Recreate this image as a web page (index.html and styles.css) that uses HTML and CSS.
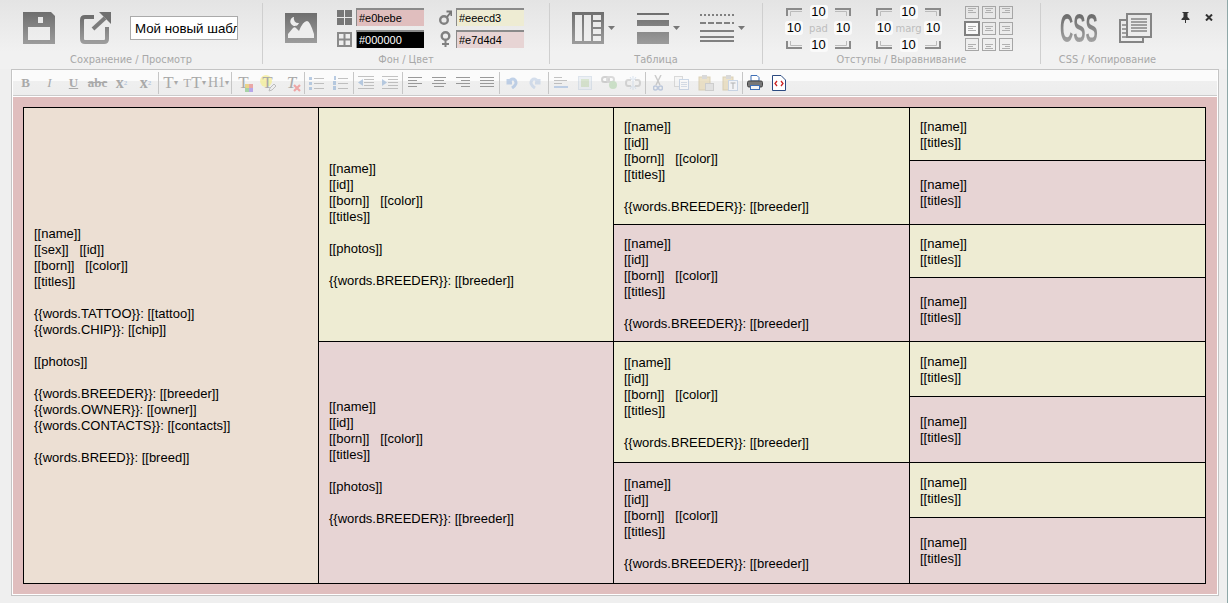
FILE: index.html
```html
<!DOCTYPE html>
<html lang="ru">

<head>
    <meta charset="UTF-8">
    <title>Редактор шаблона</title>
    <link rel="stylesheet" href="styles.css">
</head>

<body>
    <svg class="defs" width="0" height="0">
        <defs>
            <linearGradient id="grey" x1="0" y1="0" x2="0" y2="1">
                <stop offset="0" stop-color="#6e6e6e" />
                <stop offset="1" stop-color="#9c9c9c" />
            </linearGradient>
        </defs>
    </svg>

    <header class="topbar">
        <section class="group group-save">
            <div class="group-body">
                <svg class="icon" width="32" height="32" viewBox="0 0 32 32">
                    <path fill="url(#grey)" fill-rule="evenodd" d="M0 0H28L32 4V32H0ZM5 15V28H27V15ZM15 5V11H20V5Z" />
                </svg>
                <svg class="icon icon-open" width="32" height="32" viewBox="0 0 32 32">
                    <path fill="none" stroke="url(#grey)" stroke-width="4" stroke-linejoin="round" d="M15 5H6Q3 5 3 8V27Q3 30 6 30H25Q28 30 28 27V15" />
                    <path fill="none" stroke="#7c7c7c" stroke-width="4" d="M14 17L26 6" />
                    <path fill="#707070" d="M20 0H32V12Z" />
                </svg>
                <input class="name-input" type="text" value="Мой новый шаблон">
            </div>
            <div class="caption">Сохранение / Просмотр</div>
        </section>

        <section class="group group-colors">
            <div class="group-body">
                <svg class="icon" width="32" height="30" viewBox="0 0 32 30">
                    <rect width="32" height="30" fill="url(#grey)" />
                    <path fill="#ededed" d="M3 25V21L8 15Q10 13 12 16L14 18Q18 8 22 8Q25 8 29 21V25Z" />
                    <path fill="#ededed" d="M9 4A4.500 4.500 0 1 0 14 10A4.500 4.500 0 0 1 9 4Z" />
                </svg>
                <div class="swatches">
                    <div class="swatch-row">
                        <svg width="15" height="15" viewBox="0 0 15 15">
                            <path fill="#777" d="M0 0H7V7H0ZM8 0H15V7H8ZM0 8H7V15H0ZM8 8H15V15H8Z" />
                        </svg>
                        <input class="color-input bg-pink" type="text" value="#e0bebe">
                    </div>
                    <div class="swatch-row">
                        <svg width="15" height="15" viewBox="0 0 15 15">
                            <path fill="#8a8a8a" fill-rule="evenodd" d="M0 0H15V15H0ZM2 2V6.500H6.500V2ZM8.500 2V6.500H13V2ZM2 8.500V13H6.500V8.500ZM8.500 8.500V13H13V8.500Z" />
                        </svg>
                        <input class="color-input bg-black" type="text" value="#000000">
                    </div>
                </div>
                <div class="swatches swatches-sex">
                    <div class="swatch-row">
                        <svg width="13" height="15" viewBox="0 0 13 15">
                            <circle cx="5" cy="10" r="3.800" fill="none" stroke="#808080" stroke-width="2.400" />
                            <path fill="none" stroke="#777" stroke-width="2" d="M8 7L12 2M7.500 1.500H12.500V6" />
                        </svg>
                        <input class="color-input bg-yellow" type="text" value="#eeecd3">
                    </div>
                    <div class="swatch-row">
                        <svg width="13" height="16" viewBox="0 0 13 16">
                            <circle cx="6.500" cy="5" r="3.800" fill="none" stroke="#808080" stroke-width="2.400" />
                            <path fill="none" stroke="#808080" stroke-width="2" d="M6.500 9V16M3 13H10" />
                        </svg>
                        <input class="color-input bg-rose" type="text" value="#e7d4d4">
                    </div>
                </div>
            </div>
            <div class="caption">Фон / Цвет</div>
        </section>

        <section class="group group-table">
            <div class="group-body">
                <svg class="icon" width="32" height="32" viewBox="0 0 32 32">
                    <path fill="url(#grey)" fill-rule="evenodd" d="M0 0H32V32H0ZM3 3V29H10V3ZM12 3V29H19V3ZM21 3V8H29V3ZM21 10V15H29V10ZM21 17V22H29V17ZM21 24V29H29V24Z" />
                </svg>
                <svg class="caret" width="7" height="4" viewBox="0 0 7 4"><path fill="#777" d="M0 0H7L3.500 4Z" /></svg>
                <svg class="icon icon-borders" width="32" height="31" viewBox="0 0 32 31">
                    <path fill="url(#grey)" d="M0 0H32V2H0ZM0 7H32V13H0ZM0 19H32V31H0Z" />
                </svg>
                <svg class="caret" width="7" height="4" viewBox="0 0 7 4"><path fill="#777" d="M0 0H7L3.500 4Z" /></svg>
                <svg class="icon icon-lines" width="34" height="30" viewBox="0 0 34 30">
                    <g fill="none" stroke="#808080">
                        <path stroke-width="2" stroke-dasharray="2 2" d="M0 2H34" />
                        <path stroke-width="2" stroke-dasharray="6 2" d="M0 10H34" />
                        <path stroke-width="2" d="M0 18H34M0 24H34M0 28H34" />
                    </g>
                </svg>
                <svg class="caret" width="7" height="4" viewBox="0 0 7 4"><path fill="#777" d="M0 0H7L3.500 4Z" /></svg>
            </div>
            <div class="caption">Таблица</div>
        </section>

        <section class="group group-spacing">
            <div class="group-body">
                <div class="box-grid">
                    <svg class="corner" width="16" height="8" viewBox="0 0 16 8"><path fill="none" stroke="#8a8a8a" stroke-width="2" d="M1 8V1H16" /><path fill="none" stroke="#bbb" d="M4.500 8V3.500H16" /></svg>
                    <span class="num">10</span>
                    <svg class="corner" width="16" height="8" viewBox="0 0 16 8"><path fill="none" stroke="#8a8a8a" stroke-width="2" d="M15 8V1H0" /><path fill="none" stroke="#bbb" d="M11.500 8V3.500H0" /></svg>
                    <span class="num">10</span>
                    <span class="box-label">pad</span>
                    <span class="num">10</span>
                    <svg class="corner" width="16" height="8" viewBox="0 0 16 8"><path fill="none" stroke="#8a8a8a" stroke-width="2" d="M1 0V7H16" /><path fill="none" stroke="#bbb" d="M4.500 0V4.500H16" /></svg>
                    <span class="num">10</span>
                    <svg class="corner" width="16" height="8" viewBox="0 0 16 8"><path fill="none" stroke="#8a8a8a" stroke-width="2" d="M15 0V7H0" /><path fill="none" stroke="#bbb" d="M11.500 0V4.500H0" /></svg>
                </div>
                <div class="box-grid">
                    <svg class="corner" width="16" height="8" viewBox="0 0 16 8"><path fill="none" stroke="#8a8a8a" stroke-width="2" d="M1 8V1H16" /><path fill="none" stroke="#bbb" d="M4.500 8V3.500H16" /></svg>
                    <span class="num">10</span>
                    <svg class="corner" width="16" height="8" viewBox="0 0 16 8"><path fill="none" stroke="#8a8a8a" stroke-width="2" d="M15 8V1H0" /><path fill="none" stroke="#bbb" d="M11.500 8V3.500H0" /></svg>
                    <span class="num">10</span>
                    <span class="box-label">marg</span>
                    <span class="num">10</span>
                    <svg class="corner" width="16" height="8" viewBox="0 0 16 8"><path fill="none" stroke="#8a8a8a" stroke-width="2" d="M1 0V7H16" /><path fill="none" stroke="#bbb" d="M4.500 0V4.500H16" /></svg>
                    <span class="num">10</span>
                    <svg class="corner" width="16" height="8" viewBox="0 0 16 8"><path fill="none" stroke="#8a8a8a" stroke-width="2" d="M15 0V7H0" /><path fill="none" stroke="#bbb" d="M11.500 0V4.500H0" /></svg>
                </div>
                <div class="align-grid">
                    <i class="align-cell top left"></i>
                    <i class="align-cell top center"></i>
                    <i class="align-cell top right"></i>
                    <i class="align-cell middle left active"></i>
                    <i class="align-cell middle center"></i>
                    <i class="align-cell middle right"></i>
                    <i class="align-cell bottom left"></i>
                    <i class="align-cell bottom center"></i>
                    <i class="align-cell bottom right"></i>
                </div>
            </div>
            <div class="caption">Отступы / Выравнивание</div>
        </section>

        <section class="group group-css">
            <div class="group-body">
                <span class="css-mark"><span>CSS</span></span>
                <svg class="icon icon-copy" width="33" height="31" viewBox="0 0 33 31">
                    <g fill="none" stroke="#858585" stroke-width="2">
                        <path d="M7 7H1V29H24V24" />
                        <rect x="8" y="1" width="24" height="23" />
                        <path stroke-width="1.300" d="M12 6H28M12 9H28M12 12H28M12 15H28M12 18H28M3 12H7M3 16H7M3 20H7M3 24H7" />
                    </g>
                </svg>
            </div>
            <div class="caption">CSS / Копирование</div>
        </section>

        <div class="window-btns">
            <svg width="9" height="11" viewBox="0 0 9 11"><path fill="#333" d="M1.500 0H7.500V1H6.500V5L8.500 7V8H5V11H4V8H.500V7L2.500 5V1H1.500Z" /></svg>
            <svg width="8" height="7" viewBox="0 0 8 7"><path fill="none" stroke="#333" stroke-width="2" d="M1 .500L7 6.500M7 .500L1 6.500" /></svg>
        </div>
    </header>

    <div class="editor">
        <div class="toolbar">
            <span class="tool tool-text bold">B</span>
            <span class="tool tool-text italic">I</span>
            <span class="tool tool-text under">U</span>
            <span class="tool tool-text strike">abc</span>
            <span class="tool tool-text bold script">x<sub>2</sub></span>
            <span class="tool tool-text bold script">x<sup>2</sup></span>
            <b class="sep"></b>
            <span class="tool tool-text big">T<small>▾</small></span>
            <span class="tool tool-text big"><em>T</em>T<small>▾</small></span>
            <span class="tool tool-text big h1">H1<small>▾</small></span>
            <b class="sep"></b>
            <span class="tool tool-text big">T<svg class="mini" width="8" height="8" viewBox="0 0 8 8"><path fill="#e8c860" d="M0 0H4V4H0Z" /><path fill="#e88a8a" d="M4 0H8V4H4Z" /><path fill="#8ac88a" d="M0 4H4V8H0Z" /><path fill="#a08ae8" d="M4 4H8V8H4Z" /></svg></span>
            <span class="tool tool-text big">
                <svg class="hl" width="12" height="12" viewBox="0 0 12 12"><circle cx="6" cy="6" r="6" fill="#f4ee90" /></svg>T<svg class="mini" width="9" height="9" viewBox="0 0 9 9"><path fill="#eee" stroke="#aaa" d="M1 8L2 5L6 1L8 3L4 7Z" /></svg>
            </span>
            <span class="tool tool-text big italic">T<svg class="mini" width="8" height="8" viewBox="0 0 8 8"><path fill="none" stroke="#ee8888" stroke-width="2.200" d="M1 1L7 7M7 1L1 7" /></svg></span>
            <b class="sep"></b>
            <span class="tool">
                <svg width="15" height="14" viewBox="0 0 15 14"><path fill="#9db8d8" d="M0 1H3V4H0ZM0 6H3V9H0ZM0 11H3V14H0Z" /><path stroke="#aaa" d="M5 2.500H15M5 7.500H15M5 12.500H15" /></svg>
            </span>
            <span class="tool">
                <svg width="15" height="14" viewBox="0 0 15 14"><path fill="#9db8d8" d="M1 0H3V4H1ZM0 5H3V9H0ZM0 10H3V14H0Z" /><path stroke="#aaa" d="M5 2.500H15M5 7.500H15M5 12.500H15" /></svg>
            </span>
            <b class="sep"></b>
            <span class="tool">
                <svg width="16" height="14" viewBox="0 0 16 14"><path stroke="#aaa" d="M0 .500H16M6 3.500H16M6 6.500H16M6 9.500H16M0 12.500H16" /><path fill="#9db8d8" d="M0 6.500L5 3V10Z" /></svg>
            </span>
            <span class="tool">
                <svg width="16" height="14" viewBox="0 0 16 14"><path stroke="#aaa" d="M0 .500H16M6 3.500H16M6 6.500H16M6 9.500H16M0 12.500H16" /><path fill="#9db8d8" d="M5 6.500L0 3V10Z" /></svg>
            </span>
            <b class="sep"></b>
            <span class="tool tool-solid">
                <svg width="14" height="12" viewBox="0 0 14 12"><path stroke="#999" d="M0 .500H14M0 3.500H9M0 6.500H14M0 9.500H9" /></svg>
            </span>
            <span class="tool tool-solid">
                <svg width="14" height="12" viewBox="0 0 14 12"><path stroke="#999" d="M0 .500H14M2 3.500H12M0 6.500H14M2 9.500H12" /></svg>
            </span>
            <span class="tool tool-solid">
                <svg width="14" height="12" viewBox="0 0 14 12"><path stroke="#999" d="M0 .500H14M5 3.500H14M0 6.500H14M5 9.500H14" /></svg>
            </span>
            <span class="tool tool-solid">
                <svg width="14" height="12" viewBox="0 0 14 12"><path stroke="#999" d="M0 .500H14M0 3.500H14M0 6.500H14M0 9.500H14" /></svg>
            </span>
            <b class="sep"></b>
            <span class="tool">
                <svg width="13" height="13" viewBox="0 0 13 13"><path fill="none" stroke="#a8c0e0" stroke-width="3" d="M3 3V7H7M3 7Q7 1 10 4Q13 8 7 12" /></svg>
            </span>
            <span class="tool">
                <svg width="13" height="13" viewBox="0 0 13 13"><path fill="none" stroke="#c4d2e6" stroke-width="3" d="M10 3V7H6M10 7Q6 1 3 4Q0 8 6 12" /></svg>
            </span>
            <b class="sep"></b>
            <span class="tool">
                <svg width="14" height="11" viewBox="0 0 14 11"><path stroke="#aaa" d="M0 .500H8M0 3.500H13M0 6.500H8" /><path stroke="#a8c0e0" stroke-width="2" d="M0 10H14" /></svg>
            </span>
            <span class="tool tool-faint">
                <svg width="14" height="14" viewBox="0 0 14 14"><rect x=".5" y=".5" width="13" height="13" fill="#dfe6ee" stroke="#c0cede" /><rect x="3" y="3" width="8" height="8" fill="#b8d0a8" /></svg>
            </span>
            <span class="tool tool-faint">
                <svg width="16" height="13" viewBox="0 0 16 13"><rect x="1" y="1" width="7" height="5" rx="2.500" fill="none" stroke="#aaa" stroke-width="2" /><rect x="6" y="1" width="7" height="5" rx="2.500" fill="none" stroke="#bbb" stroke-width="2" /><circle cx="12" cy="9" r="4" fill="#a8d0a0" /></svg>
            </span>
            <span class="tool tool-faint">
                <svg width="16" height="14" viewBox="0 0 16 14"><path fill="none" stroke="#b4b4b4" stroke-width="2" d="M6 4H3Q1 4 1 7Q1 10 3 10H6M10 4H13Q15 4 15 7Q15 10 13 10H10" /><path stroke="#b8cce4" d="M8 0V14M5 1L7 4M11 1L9 4M5 13L7 10M11 13L9 10" /></svg>
            </span>
            <b class="sep"></b>
            <span class="tool">
                <svg width="10" height="16" viewBox="0 0 10 16"><path stroke="#b8b8b8" stroke-width="1.500" d="M2 0L7 10M8 0L3 10" /><circle cx="2.500" cy="13" r="2" fill="none" stroke="#a8b8d4" stroke-width="1.500" /><circle cx="7.500" cy="13" r="2" fill="none" stroke="#a8b8d4" stroke-width="1.500" /></svg>
            </span>
            <span class="tool">
                <svg width="15" height="14" viewBox="0 0 15 14"><rect x=".5" y=".5" width="8" height="10" fill="#f4f4f4" stroke="#ccc" /><rect x="5.500" y="3.500" width="9" height="10" fill="#fafafa" stroke="#b8c8de" /><path stroke="#c8d2e0" d="M7 6.500H13M7 8.500H13M7 10.500H13" /></svg>
            </span>
            <span class="tool">
                <svg width="16" height="16" viewBox="0 0 16 16"><rect x="1" y="2" width="11" height="13" fill="#e6d8b4" stroke="#cdbf9c" /><rect x="4" y="0" width="5" height="4" fill="#ccc" /><rect x="7.500" y="8.500" width="8" height="7" fill="#dcdcdc" stroke="#c0c0c0" /></svg>
            </span>
            <span class="tool">
                <svg width="16" height="16" viewBox="0 0 16 16"><rect x="1" y="2" width="10" height="13" fill="#e6d8b4" stroke="#cdbf9c" /><rect x="4" y="0" width="5" height="4" fill="#ccc" /><rect x="6.500" y="5.500" width="9" height="10" fill="#f4f6fa" stroke="#b8c8de" /><path fill="none" stroke="#999" d="M8.500 8H13.500M11 8V14" /></svg>
            </span>
            <b class="sep"></b>
            <span class="tool tool-solid">
                <svg width="16" height="15" viewBox="0 0 16 15"><path fill="#fff" stroke="#3f6fb5" d="M4 .5H10L12 2.500V6H4Z" /><rect x=".5" y="6" width="15" height="6" rx="1.500" fill="#777" stroke="#444" /><rect x="3.500" y="10.500" width="9" height="4" fill="#f4f4f4" stroke="#3f6fb5" /></svg>
            </span>
            <span class="tool tool-solid">
                <svg width="14" height="16" viewBox="0 0 14 16"><path fill="#fff" stroke="#2b4a80" d="M.5 .5H9L13.500 5V15.500H.5Z" /><path fill="none" stroke="#cc2222" stroke-width="1.300" d="M5 6L3 8.500L5 11M9 6L11 8.500L9 11" /></svg>
            </span>
        </div>

        <div class="content">
            <table class="pedigree">
                <colgroup>
                    <col class="col-a">
                    <col class="col-b">
                    <col class="col-c">
                    <col class="col-d">
                </colgroup>
                <tr class="row-1">
                    <td class="root" rowspan="8">
                        [[name]]<br>
                        [[sex]]&nbsp;&nbsp;&nbsp;[[id]]<br>
                        [[born]]&nbsp;&nbsp;&nbsp;[[color]]<br>
                        [[titles]]<br>
                        <br>
                        {{words.TATTOO}}: [[tattoo]]<br>
                        {{words.CHIP}}: [[chip]]<br>
                        <br>
                        [[photos]]<br>
                        <br>
                        {{words.BREEDER}}: [[breeder]]<br>
                        {{words.OWNER}}: [[owner]]<br>
                        {{words.CONTACTS}}: [[contacts]]<br>
                        <br>
                        {{words.BREED}}: [[breed]]
                    </td>
                    <td class="male" rowspan="4">
                        [[name]]<br>
                        [[id]]<br>
                        [[born]]&nbsp;&nbsp;&nbsp;[[color]]<br>
                        [[titles]]<br>
                        <br>
                        [[photos]]<br>
                        <br>
                        {{words.BREEDER}}: [[breeder]]
                    </td>
                    <td class="male low" rowspan="2">
                        [[name]]<br>
                        [[id]]<br>
                        [[born]]&nbsp;&nbsp;&nbsp;[[color]]<br>
                        [[titles]]<br>
                        <br>
                        {{words.BREEDER}}: [[breeder]]
                    </td>
                    <td class="male low">[[name]]<br>[[titles]]</td>
                </tr>
                <tr class="row-2">
                    <td class="female">[[name]]<br>[[titles]]</td>
                </tr>
                <tr class="row-3">
                    <td class="female low" rowspan="2">
                        [[name]]<br>
                        [[id]]<br>
                        [[born]]&nbsp;&nbsp;&nbsp;[[color]]<br>
                        [[titles]]<br>
                        <br>
                        {{words.BREEDER}}: [[breeder]]
                    </td>
                    <td class="male low">[[name]]<br>[[titles]]</td>
                </tr>
                <tr class="row-4">
                    <td class="female">[[name]]<br>[[titles]]</td>
                </tr>
                <tr class="row-5">
                    <td class="female" rowspan="4">
                        [[name]]<br>
                        [[id]]<br>
                        [[born]]&nbsp;&nbsp;&nbsp;[[color]]<br>
                        [[titles]]<br>
                        <br>
                        [[photos]]<br>
                        <br>
                        {{words.BREEDER}}: [[breeder]]
                    </td>
                    <td class="male low" rowspan="2">
                        [[name]]<br>
                        [[id]]<br>
                        [[born]]&nbsp;&nbsp;&nbsp;[[color]]<br>
                        [[titles]]<br>
                        <br>
                        {{words.BREEDER}}: [[breeder]]
                    </td>
                    <td class="male low">[[name]]<br>[[titles]]</td>
                </tr>
                <tr class="row-6">
                    <td class="female">[[name]]<br>[[titles]]</td>
                </tr>
                <tr class="row-7">
                    <td class="female low" rowspan="2">
                        [[name]]<br>
                        [[id]]<br>
                        [[born]]&nbsp;&nbsp;&nbsp;[[color]]<br>
                        [[titles]]<br>
                        <br>
                        {{words.BREEDER}}: [[breeder]]
                    </td>
                    <td class="male low">[[name]]<br>[[titles]]</td>
                </tr>
                <tr class="row-8">
                    <td class="female">[[name]]<br>[[titles]]</td>
                </tr>
            </table>
        </div>
    </div>
</body>

</html>
```

FILE: styles.css
```css
html {
    overflow: hidden;
}

body {
    margin: 0;
    height: 603px;
    box-sizing: border-box;
    background-color: #efefef;
    border-right: 1px solid #8fa8a8;
    font-family: "Liberation Sans", Arial, sans-serif;
    font-size: 12px;
    color: #000;
}

.defs {
    display: block;
    height: 0;
}

/* top panel */

.topbar {
    display: flex;
    height: 69px;
    padding-top: 3px;
    box-sizing: border-box;
    background: linear-gradient(#e4e4e4, #f1f1f1 75%);
}

.group {
    height: 61px;
    box-sizing: content-box;
    border-right: 1px solid #cfcfcf;
}

.group-save {
    width: 262px;
}

.group-colors {
    width: 286px;
}

.group-table {
    width: 212px;
}

.group-spacing {
    width: 277px;
}

.group-css {
    width: 133px;
    border-right: none;
}

.group-body {
    display: flex;
    align-items: center;
    height: 50px;
    padding-left: 22px;
}

.group-save .group-body {
    padding-left: 23px;
}

.group-css .group-body {
    padding-left: 19px;
}

.caption {
    height: 14px;
    line-height: 14px;
    margin-top: 0;
    text-align: center;
    font-family: "DejaVu Sans", sans-serif;
    font-size: 9.800px;
    color: #a8a8a8;
}

.icon {
    display: block;
    flex: none;
}

.icon-open {
    margin-left: 24px;
}

.name-input {
    width: 108px;
    height: 24px;
    margin-left: 19px;
    padding: 0 0 0 4px;
    box-sizing: border-box;
    border: 1px solid #aaa;
    background: #fff;
    font-family: "Liberation Sans", sans-serif;
    font-size: 13.300px;
    color: #000;
}

.swatches {
    display: flex;
    flex-direction: column;
    gap: 4px;
    margin-left: 20px;
}

.swatches-sex {
    margin-left: 15px;
}

.swatch-row {
    display: flex;
    align-items: center;
    gap: 4px;
}

.swatch-row svg {
    flex: none;
}

.color-input {
    width: 68px;
    height: 18px;
    padding: 0 2px;
    box-sizing: border-box;
    border: none;
    border-top: 2px solid #8a8a8a;
    border-left: 1px solid #8a8a8a;
    font-family: "Liberation Sans", sans-serif;
    font-size: 11px;
    color: #000;
}

.bg-pink {
    background: #e0bebe;
}

.bg-black {
    background: #000;
    color: #fff;
}

.bg-yellow {
    background: #eeecd3;
}

.bg-rose {
    background: #e7d4d4;
}

.caret {
    display: block;
    flex: none;
    margin-left: 4px;
}

.icon-borders {
    margin-left: 22px;
}

.icon-lines {
    margin-left: 20px;
}

.box-grid {
    display: grid;
    grid-template-columns: 18px 18px 18px;
    grid-template-rows: 14px 14px 14px;
    column-gap: 6.500px;
    row-gap: 2.500px;
    align-items: center;
    justify-items: center;
    margin-right: 23px;
}

.num {
    display: block;
    width: 18px;
    height: 14px;
    line-height: 14px;
    border-radius: 3px;
    background: #fafafa;
    text-align: center;
    font-size: 13px;
    color: #000;
}

.box-label {
    font-family: "DejaVu Sans", sans-serif;
    font-size: 10px;
    color: #bdbdbd;
}

.corner {
    display: block;
}

.align-grid {
    display: grid;
    grid-template-columns: repeat(3, 14px);
    grid-template-rows: repeat(3, 13px);
    column-gap: 3px;
    row-gap: 3px;
}

.align-cell {
    display: block;
    box-sizing: border-box;
    border: 1px solid #a6a6a6;
    background-image: linear-gradient(#b0b0b0, #b0b0b0), linear-gradient(#b0b0b0, #b0b0b0), linear-gradient(#b0b0b0, #b0b0b0);
    background-repeat: no-repeat;
    background-size: 8px 1px, 5px 1px, 8px 1px;
}

.align-cell.top.left {
    background-position: 2px 1px, 2px 3px, 2px 5px;
}

.align-cell.top.center {
    background-position: 2px 1px, 3px 3px, 2px 5px;
}

.align-cell.top.right {
    background-position: 2px 1px, 5px 3px, 2px 5px;
}

.align-cell.middle.left {
    background-position: 2px 3px, 2px 5px, 2px 7px;
}

.align-cell.middle.center {
    background-position: 2px 3px, 3px 5px, 2px 7px;
}

.align-cell.middle.right {
    background-position: 2px 3px, 5px 5px, 2px 7px;
}

.align-cell.bottom.left {
    background-position: 2px 5px, 2px 7px, 2px 9px;
}

.align-cell.bottom.center {
    background-position: 2px 5px, 3px 7px, 2px 9px;
}

.align-cell.bottom.right {
    background-position: 2px 5px, 5px 7px, 2px 9px;
}

.align-cell.active {
    outline: 1px solid #808080;
    border-color: #808080;
    background-color: #fafafa;
}

.css-mark {
    display: block;
    width: 38px;
    height: 32px;
    flex: none;
}

.css-mark span {
    display: block;
    width: 83px;
    line-height: 32px;
    font-family: "Liberation Sans", sans-serif;
    font-weight: bold;
    font-size: 40px;
    color: transparent;
    background: linear-gradient(#666, #a6a6a6);
    -webkit-background-clip: text;
    background-clip: text;
    transform: scaleX(0.46);
    transform-origin: left center;
}

.icon-copy {
    margin-left: 21px;
}

.window-btns {
    display: flex;
    align-items: center;
    gap: 15px;
    height: 11px;
    margin-top: 9px;
    margin-left: 7px;
}

/* editor */

.editor {
    width: 1204px;
    margin-left: 11px;
    padding: 0 1px 1px;
    border: 1px solid #c4c4c4;
    background: #fff;
}

.toolbar {
    display: flex;
    align-items: center;
    height: 25px;
    padding-left: 0.500px;
    border-bottom: 1px solid #cbcbcb;
    background: linear-gradient(#fbfbfb 0, #fbfbfb 44%, #efefef 46%, #ededed 100%);
    margin-bottom: 1px;
}

.tool {
    display: flex;
    align-items: center;
    justify-content: center;
    position: relative;
    isolation: isolate;
    flex: none;
    width: 24px;
    height: 20px;
}

.tool > svg {
    opacity: 0.7;
}

.tool-solid > svg {
    opacity: 1;
}

.tool-faint > svg {
    opacity: 0.5;
}

.tool-text {
    font-family: "Liberation Serif", serif;
    font-size: 13px;
    color: #a9a9a9;
}

.tool-text sub,
.tool-text sup {
    font-size: 7px;
    color: #b8c8de;
}

.script {
    font-size: 16px;
}

.bold {
    font-weight: bold;
}

.italic {
    font-style: italic;
}

.under {
    text-decoration: underline;
    font-weight: bold;
}

.strike {
    text-decoration: line-through;
    font-weight: bold;
}

.big {
    font-size: 17px;
}

.big em {
    font-style: normal;
    font-size: 13px;
}

.big small {
    font-size: 8px;
}

.h1 {
    font-size: 14px;
}

.mini {
    position: absolute;
    right: 3px;
    bottom: 1px;
}

.hl {
    position: absolute;
    left: 4px;
    top: 2px;
    z-index: -1;
}

.sep {
    display: block;
    flex: none;
    width: 1px;
    height: 22px;
    background: #c6c6c6;
}

.content {
    padding: 10px;
    background: #e0bebe;
}

.pedigree {
    table-layout: fixed;
    width: 1182px;
    border-collapse: collapse;
    font-size: 13px;
    line-height: 16px;
}

.pedigree td {
    padding: 10px;
    border: 1px solid #000;
}

.pedigree td.low {
    padding-top: 11px;
    padding-bottom: 9px;
}

.col-a,
.col-b {
    width: 295px;
}

.col-c {
    width: 296px;
}

.col-d {
    width: 296px;
}

.row-1,
.row-3 {
    height: 53px;
}

.row-2,
.row-4 {
    height: 64px;
}

.row-5,
.row-7 {
    height: 55px;
}

.row-6 {
    height: 66px;
}

.row-8 {
    height: 66px;
}

.root {
    background: #ecdfd3;
}

.male {
    background: #eeecd3;
}

.female {
    background: #e7d4d4;
}
```
